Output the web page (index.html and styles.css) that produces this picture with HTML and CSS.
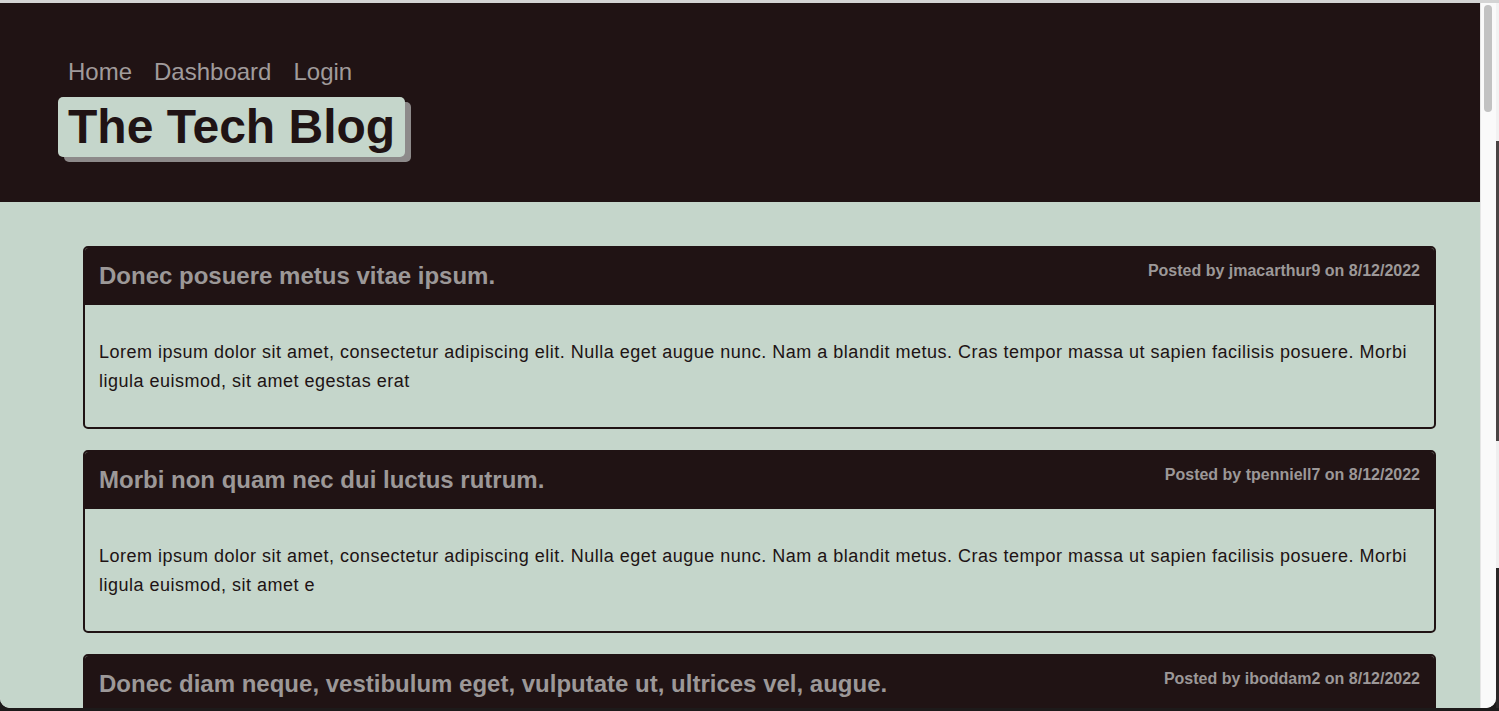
FILE: index.html
```html
<!DOCTYPE html>
<html lang="en">
<head>
<meta charset="utf-8">
<title>The Tech Blog</title>
<link rel="stylesheet" href="styles.css">
</head>
<body>
<div class="screen">
  <div class="topline"></div>
  <div class="row">
    <div class="window">
      <div class="viewport">
        <header class="site-header">
          <nav class="nav">
            <a class="nav-link" href="#">Home</a>
            <a class="nav-link" href="#">Dashboard</a>
            <a class="nav-link" href="#">Login</a>
          </nav>
          <h1 class="brand">The Tech Blog</h1>
        </header>
        <main class="main">
          <article class="card">
            <div class="card-head">
              <h2 class="card-title">Donec posuere metus vitae ipsum.</h2>
              <p class="card-meta">Posted by jmacarthur9 on 8/12/2022</p>
            </div>
            <div class="card-body">
              <p class="card-text">Lorem ipsum dolor sit amet, consectetur adipiscing elit. Nulla eget augue nunc. Nam a blandit metus. Cras tempor massa ut sapien facilisis posuere. Morbi ligula euismod, sit amet egestas erat</p>
            </div>
          </article>
          <article class="card">
            <div class="card-head">
              <h2 class="card-title">Morbi non quam nec dui luctus rutrum.</h2>
              <p class="card-meta">Posted by tpenniell7 on 8/12/2022</p>
            </div>
            <div class="card-body">
              <p class="card-text">Lorem ipsum dolor sit amet, consectetur adipiscing elit. Nulla eget augue nunc. Nam a blandit metus. Cras tempor massa ut sapien facilisis posuere. Morbi ligula euismod, sit amet e</p>
            </div>
          </article>
          <article class="card">
            <div class="card-head">
              <h2 class="card-title">Donec diam neque, vestibulum eget, vulputate ut, ultrices vel, augue.</h2>
              <p class="card-meta">Posted by iboddam2 on 8/12/2022</p>
            </div>
            <div class="card-body">
              <p class="card-text">Lorem ipsum dolor sit amet, consectetur adipiscing elit. Nulla eget augue nunc. Nam a blandit metus. Cras tempor massa ut sapien facilisis posuere.</p>
            </div>
          </article>
        </main>
      </div>
      <div class="scrollbar"><div class="thumb"></div></div>
    </div>
    <div class="side">
      <div class="side-a"></div>
      <div class="side-b"></div>
      <div class="side-c"></div>
      <div class="side-d"></div>
    </div>
  </div>
  <div class="bottomline"></div>
</div>
</body>
</html>
```

FILE: styles.css
```css
* { box-sizing: border-box; }

html, body {
  margin: 0;
  padding: 0;
  overflow: hidden;
  background: #1d1a1a;
  font-family: "Liberation Sans", Arial, sans-serif;
}

.screen {
  display: flex;
  flex-direction: column;
  width: 1499px;
  height: 711px;
}

.topline {
  height: 3px;
  flex: none;
  background: #d4d4d4;
}

.row {
  display: flex;
  height: 705px;
  flex: none;
}

.window {
  display: flex;
  width: 1496px;
  height: 705px;
  overflow: hidden;
  background: #fafafa;
  border-radius: 0 0 10px 10px;
}

.viewport {
  width: 1480px;
  height: 705px;
  overflow: hidden;
  background: #c5d6cb;
}

.scrollbar {
  width: 16px;
  flex: none;
  background: #fafafa;
  border-left: 1px solid #e6e6e6;
  padding: 2px 0 0 3px;
}

.thumb {
  width: 8px;
  height: 107px;
  border-radius: 4px;
  background: #c2c2c2;
}

.side {
  width: 3px;
  display: flex;
  flex-direction: column;
}
.side-a { height: 138px; background: #f2f2f2; }
.side-b { height: 300px; background: #4a4444; }
.side-c { height: 127px; background: #efefef; }
.side-d { flex: 1; background: #2a2626; }

.bottomline {
  height: 3px;
  flex: none;
  background: #1d1a1a;
}

/* header */
.site-header {
  background: #201314;
  padding: 55px 0 45px 58px;
}

.nav {
  display: flex;
  gap: 22px;
  height: 28px;
  margin: 0 0 11px 10px;
}

.nav-link {
  color: #a09b9b;
  text-decoration: none;
  font-size: 24px;
  line-height: 28px;
}

.brand {
  display: inline-block;
  margin: 0;
  padding: 2px 10px;
  font-size: 48px;
  line-height: 56px;
  font-weight: 700;
  color: #201314;
  background: #c5d6cb;
  border-radius: 5px;
  box-shadow: 6px 5px 0 #8d8a8a;
}

/* main */
.main {
  padding: 44px 44px 0 83px;
}

.card {
  border: 2px solid #201314;
  border-radius: 5px;
  margin-bottom: 21px;
  overflow: hidden;
}

.card-head {
  display: flex;
  justify-content: space-between;
  align-items: flex-start;
  background: #201314;
  padding: 14px 14px 15px;
}

.card-title {
  margin: 0;
  font-size: 24px;
  line-height: 28px;
  font-weight: 700;
  color: #9c9898;
}

.card-meta {
  margin: 0;
  font-size: 16px;
  line-height: 18px;
  font-weight: 700;
  color: #9c9898;
}

.card-body {
  padding: 16px 14px;
}

.card-text {
  margin: 17px 0 15px;
  font-size: 18px;
  line-height: 29px;
  letter-spacing: 0.5px;
  color: #201314;
}
```
